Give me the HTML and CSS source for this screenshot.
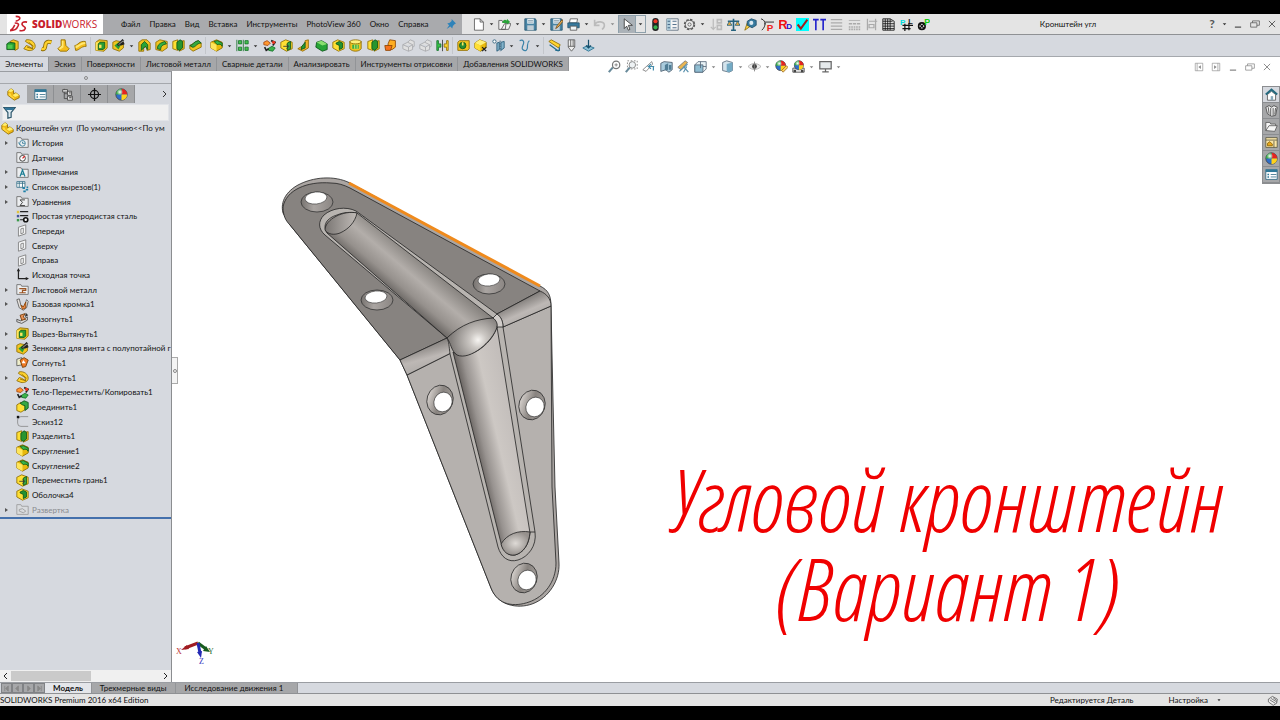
FILE: index.html
```
<!DOCTYPE html>
<html lang="ru">
<head>
    <meta charset="UTF-8">
    <meta name="viewport" content="width=device-width, initial-scale=1.0">
    <title>Кронштейн угл - SOLIDWORKS</title>
    <link rel="stylesheet" href="styles.css">
</head>
<body>
    <!-- Набор значков -->
    <svg class="sprite" aria-hidden="true">
        <defs>
            <radialGradient id="ball"><stop offset="0" stop-color="#fff"/><stop offset="1" stop-color="#fff" stop-opacity="0"/></radialGradient>
            <symbol id="caret" viewBox="0 0 8 16"><path d="M2 7h4L4 9.500z" fill="#333"/></symbol>
            <symbol id="cube" viewBox="0 0 16 16"><path d="M1 5l6-4 8 3v7l-7 4-7-4z" fill="#e8b90c" stroke="#8c6a00"/><path d="M1 5l7 3 7-4-8-3z" fill="#fff07a"/><path d="M8 8v7l-7-4V5z" fill="#ffdf34"/></symbol>
            <symbol id="boss" viewBox="0 0 16 16"><path d="M5 3l4-2 6 2v9l-4 2z" fill="#f1c420" stroke="#8c6a00"/><path d="M1 6l3-2 7 1v8H1z" fill="#24a132" stroke="#0a5418"/><path d="M2 7h6v5H2z" fill="#50ca4e"/></symbol>
            <symbol id="revolve" viewBox="0 0 16 16"><path d="M4 1c6-1 11 3 11 8 0 4-5 6-9 5l-5-2 3-4 3 1 5 3-1-4-8-5z" fill="#ffd22e" stroke="#8c6a00"/><path d="M5 10l7 2M7 4l6 5" stroke="#8c6a00"/></symbol>
            <symbol id="sweep" viewBox="0 0 16 16"><path d="M2 12c5 2 4-3 5-6s4-3 7-2" fill="none" stroke="#8c6a00" stroke-width="5"/><path d="M2 12c5 2 4-3 5-6s4-3 7-2" fill="none" stroke="#ffd22e" stroke-width="3"/></symbol>
            <symbol id="loft" viewBox="0 0 16 16"><path d="M5 1h5l1 7 4 4-3 3H4l-3-3 4-4z" fill="#f5bd1b" stroke="#8c6a00"/><path d="M6 2h2v8l-4 3-2-1 4-4z" fill="#ffe873"/></symbol>
            <symbol id="boundary" viewBox="0 0 16 16"><path d="M1 8c4 0 5-6 13-5l1 6c-7 0-8 5-13 5z" fill="#f5bd1b" stroke="#8c6a00"/><path d="M2 8c5 0 6-5 12-4v2c-6 0-8 5-12 5z" fill="#ffe873"/></symbol>
            <symbol id="cut" viewBox="0 0 16 16"><path d="M1 4l4-3 10 1v9l-4 4-10-1z" fill="#f1c420" stroke="#8c6a00"/><path d="M1 4h9v10H1z" fill="#ffe65c"/><path d="M4 6l2-2h6v7l-2 2H4z" fill="#289d35" stroke="#0a5418"/><path d="M5 7h3v4H5z" fill="#ffe65c"/></symbol>
            <symbol id="hole" viewBox="0 0 16 16"><path d="M1 4l4-2 9 2v7l-5 4-8-3z" fill="#f1c420" stroke="#8c6a00"/><path d="M3 8l5-4 3 3-3 6z" fill="#289d35"/><path d="M7 8l7-7M10 7l5-2" stroke="#222" stroke-width="3"/><path d="M8 7l6-5" stroke="#bbb"/></symbol>
            <symbol id="arch" viewBox="0 0 16 16"><path d="M1 4l4-3h6l4 4v8l-4 1-1-5-3 2v4H1z" fill="#f1c420" stroke="#8c6a00"/><path d="M4 14V7l4-4 4 4v6l-3-4z" fill="#28a436" stroke="#0a5418"/></symbol>
            <symbol id="cutsweep" viewBox="0 0 16 16"><path d="M1 4l5-3 9 2v8l-6 4-8-2z" fill="#f1c420" stroke="#8c6a00"/><path d="M3 12c0-6 4-7 9-9l2 3c-5 1-7 3-7 7z" fill="#35b044" stroke="#0a5418"/></symbol>
            <symbol id="split" viewBox="0 0 16 16"><path d="M1 3l6-2v13l-6-2z" fill="#ffdf34" stroke="#8c6a00"/><path d="M9 3l6-1v10l-6 3z" fill="#f1c420" stroke="#8c6a00"/><path d="M6 4l4-3 3 2v8l-4 3-3-2z" fill="#27952f" stroke="#0a5418"/></symbol>
            <symbol id="cutbound" viewBox="0 0 16 16"><path d="M1 8l10-6 4 3v5L5 15l-4-3z" fill="#f1c420" stroke="#8c6a00"/><path d="M1 8c4 0 5-6 11-6l3 3C9 5 8 11 4 10z" fill="#35a93f" stroke="#0a5418"/></symbol>
            <symbol id="fillet" viewBox="0 0 16 16"><path d="M1 4l7-3 7 3v7l-7 4-7-4z" fill="#e8b90c" stroke="#8c6a00"/><path d="M1 4l7 3v8l-7-4z" fill="#ffe65c"/><path d="M5 3l4-1 6 3v4c-1-3-4-3-6-2z" fill="#39b649" stroke="#0a5418"/></symbol>
            <symbol id="pattern" viewBox="0 0 16 16"><path d="M3 2h4v4H3zM11 2h4v4h-4zM3 10h4v4H3zM11 10h4v4h-4z" fill="#44c24d" stroke="#14702a"/><path d="M1 1v14M9 1v14" stroke="#14702a"/></symbol>
            <symbol id="move" viewBox="0 0 16 16"><path d="M1 4l4-2 4 3-3 3-5-1z" fill="#ff9830" stroke="#a2440f"/><path d="M6 12l5-3 4 2-3 4-5-1z" fill="#3cb34a" stroke="#14702a"/><path d="M10 2l5 2-3 4M2 10l2 4 3-2" fill="none" stroke="#222" stroke-width="2"/><circle cx="13" cy="4" r="2" fill="#e93722"/></symbol>
            <symbol id="combine" viewBox="0 0 16 16"><path d="M1 6l5-3 5 3v6l-5 3-5-2z" fill="#ffdf34" stroke="#8c6a00"/><path d="M5 4l5-3 5 2v7l-4 3V7L8 6z" fill="#36a743" stroke="#0a5418"/></symbol>
            <symbol id="moveface" viewBox="0 0 16 16"><path d="M1 4l6-3 8 3v8l-7 3-7-4z" fill="#ffdf34" stroke="#8c6a00"/><path d="M9 5l4-2v9l-4 2z" fill="#36a743" stroke="#0a5418"/><path d="M4 9h6M8 7l3 2-3 3" fill="none" stroke="#333"/></symbol>
            <symbol id="rib" viewBox="0 0 16 16"><path d="M10 2l4-1v10l-7 4-6-3 5-3c3-1 4-4 4-7z" fill="#f1b22b" stroke="#8c6a00"/><path d="M6 9l4-5v7l-5 2z" fill="#279c34" stroke="#0a5418"/></symbol>
            <symbol id="draft" viewBox="0 0 16 16"><path d="M2 4l6-2 7 4v7l-6 2-8-5z" fill="#27a537" stroke="#0a5418"/><path d="M2 4l7 4 6-2-7-4z" fill="#89df70"/></symbol>
            <symbol id="shell" viewBox="0 0 16 16"><path d="M1 4l6-3 8 3v8l-7 3-7-4z" fill="#ffdf34" stroke="#8c6a00"/><path d="M5 5l4-2 4 2v6l-4 2V8L5 6z" fill="#229232" stroke="#0a5418"/></symbol>
            <symbol id="wrap" viewBox="0 0 16 16"><path d="M1 3h14v9c-3 4-11 4-14 0z" fill="#f1c420" stroke="#8c6a00"/><ellipse cx="8" cy="3.500" rx="7" ry="2.500" fill="#fff07a" stroke="#8c6a00"/><path d="M4 7h8v5H4z" fill="#35b044"/><path d="M7 7v5M10 7v5" stroke="#fff07a"/></symbol>
            <symbol id="bend" viewBox="0 0 16 16"><path d="M7 1l7 1v8l-4 3H5V6z" fill="#ffae22" stroke="#8a4300"/><path d="M1 8h9l-2 6H2z" fill="#f5721e" stroke="#8a4300"/></symbol>
            <symbol id="ghost" viewBox="0 0 16 16"><path d="M1 7l6-3 6 3v6l-5 2-7-3zM7 4l3-3 5 2v6l-2 1M1 7l7 3 5-3M8 10v5" fill="#e0e0e0" stroke="#a6a8ab"/></symbol>
            <symbol id="mirror" viewBox="0 0 16 16"><path d="M1 2h2v4h3v4H3v4H1z" fill="#38c449" stroke="#14702a"/><path d="M15 2h-2v4h-3v4h3v4h2z" fill="#ffd52e" stroke="#8c6a00"/><path d="M8 1v14" stroke="#333"/></symbol>
            <symbol id="dome" viewBox="0 0 16 16"><path d="M1 4l2-2h12v10l-2 2H1z" fill="#f1c420" stroke="#8c6a00"/><circle cx="7" cy="8" r="4" fill="#278e34" stroke="#0a5418"/><path d="M6 4h2v4H6z" fill="#ffe65c"/></symbol>
            <symbol id="delbody" viewBox="0 0 16 16"><use href="#cube"/><path d="M10 10l5 5M15 10l-5 5" stroke="#222" stroke-width="1.500"/></symbol>
            <symbol id="refgeo" viewBox="0 0 16 16"><path d="M6 5l3-1v9l-3 2zM11 4l4-1v8l-4 3z" fill="#83b2ca" stroke="#225875"/><path d="M10 2v13" stroke="#225875" stroke-dasharray="2 1"/><circle cx="3" cy="3" r="2" fill="#fff" stroke="#225875"/></symbol>
            <symbol id="curve" viewBox="0 0 16 16"><path d="M2 2c5-2 6 2 4 6s0 7 4 6c4-2-1-8 4-12" fill="none" stroke="#3a83a9" stroke-width="1.500"/></symbol>
            <symbol id="measure" viewBox="0 0 16 16"><path d="M1 3l3-2 11 6-2 4z" fill="#ffd52e" stroke="#8c6a00"/><path d="M2 7l11 8M9 14h5v-4" fill="none" stroke="#246d8e" stroke-width="1.500"/></symbol>
            <symbol id="pen" viewBox="0 0 16 16"><path d="M4 1h8v9l-4 5-4-5zM4 9h8M7 1v8M10 1v8" fill="#eee" stroke="#555"/></symbol>
            <symbol id="anchor" viewBox="0 0 16 16"><path d="M1 11l6-3 8 3-7 4z" fill="#8dc1d7" stroke="#246d8e"/><path d="M8 1v10M5 8l3 3 3-3" stroke="#154f6c" fill="none" stroke-width="1.500"/></symbol>
            <symbol id="part" viewBox="0 0 16 16"><path d="M1 4l4-3 3 2v4l3-1 4 3v3l-6 3-8-6z" fill="#eeb716" stroke="#8c6a00"/><path d="M1 4l4-3 3 2-3 2zM7 9l4-3 4 3-5 2z" fill="#ffef6e"/><path d="M2 6l3 1v2l4 3v2L2 9z" fill="#ffd83c"/></symbol>
            <symbol id="props" viewBox="0 0 16 16"><path d="M1 2h14v12H1z" fill="#fff" stroke="#2a6480"/><path d="M1 2h14v3H1z" fill="#2f7898"/><path d="M3 7h2v2H3zM3 10h2v2H3z" fill="#2f7898"/><path d="M7 8h7M7 11h7" stroke="#346e87"/></symbol>
            <symbol id="config" viewBox="0 0 16 16"><path d="M4 1v12h5M4 7h4" fill="none" stroke="#444"/><path d="M2 2h6v3H2zM8 4h5v5H8zM8 10h6v5H8z" fill="#ddd" stroke="#444"/><path d="M10 6h2M10 12h3" stroke="#222"/></symbol>
            <symbol id="target" viewBox="0 0 16 16"><circle cx="8" cy="8" r="5" fill="none" stroke="#111" stroke-width="1.500"/><path d="M8 0v16M0 8h16" stroke="#111" stroke-width="1.500"/></symbol>
            <symbol id="sphere" viewBox="0 0 16 16"><circle cx="8" cy="8" r="7" fill="#2f6fca" stroke="#444"/><path d="M8 8V1a7 7 0 0 1 7 7z" fill="#e5251f"/><path d="M8 8h7a7 7 0 0 1-7 7z" fill="#ffd21b"/><path d="M8 8H1a7 7 0 0 1 7-7z" fill="#38a844"/><circle cx="6" cy="5" r="4" fill="url(#ball)"/></symbol>
            <symbol id="scene" viewBox="0 0 16 16"><path d="M1 10h14v5H1z" fill="#eee" stroke="#444"/><path d="M2 12h3v3H2zM11 12h3v3h-3z" fill="#444"/><use href="#sphere" x="2" y="0" width="13" height="13"/></symbol>
            <symbol id="appear" viewBox="0 0 16 16"><use href="#sphere" width="14" height="14"/><path d="M8 13l6-6 2 2-6 6z" fill="#ffd45c" stroke="#986524"/></symbol>
            <symbol id="funnel" viewBox="0 0 16 16"><path d="M1 2h14l-5 6v6l-4 1V8z" fill="#dceaf1" stroke="#30596d" stroke-width="1.500"/><path d="M2 2h12l-2 3H4z" fill="#31759a"/></symbol>
            <symbol id="folder" viewBox="0 0 16 16"><path d="M1 2h5l1 2h8v10H1z" fill="#eceef0" stroke="#666"/></symbol>
            <symbol id="history" viewBox="0 0 16 16"><use href="#folder"/><circle cx="8" cy="9" r="3.500" fill="none" stroke="#2c7796"/><path d="M8 7v2h3M3 8l2 3" stroke="#2c7796" fill="none"/></symbol>
            <symbol id="sensor" viewBox="0 0 16 16"><use href="#folder"/><circle cx="8" cy="9" r="3.500" fill="#fff" stroke="#222"/><path d="M8 9l3-3" stroke="#d22" stroke-width="1.500"/></symbol>
            <symbol id="note" viewBox="0 0 16 16"><use href="#folder"/><path d="M5 13l3-8 3 8M6 10h4" fill="none" stroke="#1f7f96" stroke-width="1.500"/></symbol>
            <symbol id="cutlist" viewBox="0 0 16 16"><path d="M1 2h10v7H1zM4 2v7M8 2v7M1 4h10" fill="#fff" stroke="#346e87"/><path d="M8 9h3v2H8zM12 11h3v2h-3zM9 13h3v2H9zM13 8h2v2h-2z" fill="#1b80a8"/></symbol>
            <symbol id="sum" viewBox="0 0 16 16"><use href="#folder"/><path d="M11 6H5l3 3-3 4h6" fill="none" stroke="#222"/></symbol>
            <symbol id="material" viewBox="0 0 16 16"><path d="M5 2h10M5 7h10M5 12h5" stroke="#222" stroke-width="1.500"/><path d="M1 1h3v3H1z" fill="#e0c33d"/><path d="M1 6h3v3H1z" fill="#459"/><path d="M1 11h3v3H1z" fill="#3a9a4a"/><circle cx="12" cy="12" r="2.500" fill="#fff" stroke="#111" stroke-width="2"/></symbol>
            <symbol id="plane" viewBox="0 0 16 16"><path d="M3 4l9-3v11l-9 3zM6 6l3-1v6l-3 1z" fill="#f4f5f6" stroke="#777"/></symbol>
            <symbol id="origin" viewBox="0 0 16 16"><path d="M3 2v11h11" fill="none" stroke="#222" stroke-width="1.500"/><path d="M3 0l2 4H1zM16 13l-4-2v4z" fill="#222"/></symbol>
            <symbol id="sheet" viewBox="0 0 16 16"><use href="#folder"/><path d="M4 7h8v2H8v3H4M8 12h4" fill="none" stroke="#9c5423" stroke-width="1.500"/></symbol>
            <symbol id="flange" viewBox="0 0 16 16"><path d="M1 2l3-1 2 8 4 2 3-9 2 2-2 8-4 3-5-3z" fill="#e9e5e0" stroke="#555"/><path d="M6 9l3 2 3-6v7l-4 2z" fill="#ef8a4a" stroke="#8a4300"/></symbol>
            <symbol id="unfold" viewBox="0 0 16 16"><path d="M1 9l5 2 8-5v4l-7 4-6-2z" fill="#ddd" stroke="#444"/><path d="M5 4l6-2-2 4 3 3-5 1z" fill="#e8935a" stroke="#6d3500"/><path d="M12 1l3 3-4 2z" fill="#333"/></symbol>
            <symbol id="refold" viewBox="0 0 16 16"><path d="M1 4l6-2v9l-6 1z" fill="#eec" stroke="#555"/><path d="M5 5l5-3 5 3-3 8-4 1z" fill="#ef7a24" stroke="#6d3500"/><path d="M9 5l3 4H7z" fill="#fff"/></symbol>
            <symbol id="sketch" viewBox="0 0 16 16"><path d="M15 2H6a4 4 0 0 0-4 4v4a4 4 0 0 0 4 4h9" fill="none" stroke="#888"/><path d="M1 1h3v3H1z" fill="#111"/></symbol>
            <symbol id="flat" viewBox="0 0 16 16"><path d="M1 2h5l1 2h8v10H1z" fill="#d9dbde" stroke="#999"/><path d="M4 8l4-1 4 3-3 2-5-2z" fill="none" stroke="#999"/></symbol>
            <symbol id="pushpin" viewBox="0 0 16 16"><path d="M9 0l7 7-2 1-3 3-1 4-3-3-6 4 4-6-3-3 4-1 3-3z" fill="#2f83b9"/></symbol>
            <symbol id="new" viewBox="0 0 16 16"><path d="M3 1h7l4 4v10H3zM10 1v4h4" fill="#fff" stroke="#555"/></symbol>
            <symbol id="open" viewBox="0 0 16 16"><path d="M1 14V3h4l1 2h4l-1 9zM4 14l4-7h8l-3 7z" fill="#f4f4f4" stroke="#555"/><path d="M5 6c2-5 4-4 6-3V1l4 4-4 3V6" fill="#2ba33a"/></symbol>
            <symbol id="save" viewBox="0 0 16 16"><path d="M1 1h13l1 2v12H1z" fill="#4884a4" stroke="#26546e"/><path d="M4 1h8v6H4z" fill="#e8f0f4"/><path d="M4 9h8v6H4z" fill="#c0ced6"/><path d="M5 3h6M5 5h6" stroke="#7c98a6"/></symbol>
            <symbol id="saveas" viewBox="0 0 16 16"><use href="#save"/><path d="M7 13l2-4 6-7 1 2-6 7z" fill="#f0b95a" stroke="#704818"/></symbol>
            <symbol id="print" viewBox="0 0 16 16"><path d="M4 1h9l-1 5H3z" fill="#fff" stroke="#555"/><path d="M1 6h14v6H1z" fill="#377a9e" stroke="#26546e"/><path d="M4 10h8v5H4z" fill="#f0f4f6" stroke="#555"/></symbol>
            <symbol id="undo" viewBox="0 0 16 16"><path d="M2 2v7h6M2 8c3-5 12-4 12 1 0 3-1 4-3 5" fill="none" stroke="#bbb" stroke-width="2"/></symbol>
            <symbol id="cursor" viewBox="0 0 16 16"><path d="M4 1v12l3-3 2 5 2-1-2-5h5z" fill="#fff" stroke="#333"/></symbol>
            <symbol id="traffic" viewBox="0 0 16 16"><rect x="4" y="0" width="8" height="16" rx="4" fill="#222"/><circle cx="8" cy="4" r="2.500" fill="#f03524"/><circle cx="8" cy="11.500" r="2.500" fill="#35b34b"/></symbol>
            <symbol id="options" viewBox="0 0 16 16"><path d="M1 1h14v14H1z" fill="#f4f4f4" stroke="#567"/><path d="M1 1h5v14H1z" fill="#aecbd9"/><path d="M2 4h3M2 8h3M2 12h3M8 4h5M8 8h5M8 12h5" stroke="#357"/></symbol>
            <symbol id="gear" viewBox="0 0 16 16"><circle cx="8" cy="8" r="6" fill="none" stroke="#555" stroke-width="2" stroke-dasharray="3 1.700"/><circle cx="8" cy="8" r="5" fill="#eee" stroke="#555"/><circle cx="8" cy="8" r="2" fill="none" stroke="#555"/></symbol>
            <symbol id="sort" viewBox="0 0 16 16"><path d="M4 1v13M1 11l3 3 3-3" fill="none" stroke="#bbb" stroke-width="1.500"/><path d="M9 2h5v4H9zM9 9h5v5H9z" fill="none" stroke="#bbb" stroke-width="2"/></symbol>
            <symbol id="scales" viewBox="0 0 16 16"><path d="M8 1v13M1 4h14M5 15h6" stroke="#25627e" stroke-width="2"/><path d="M0 9l3-5 3 5zM10 9l3-5 3 5z" fill="#e9a93b" stroke="#25627e"/></symbol>
            <symbol id="tape" viewBox="0 0 16 16"><path d="M1 15l3-9 4 4z" fill="#ffd54c" stroke="#8c6a00"/><path d="M4 4l5-3 6 2v6l-5 3-6-3z" fill="#377a9e" stroke="#1c4e69"/><circle cx="9" cy="6" r="2.500" fill="#dceaf1"/></symbol>
            <symbol id="yp" viewBox="0 0 16 16"><path d="M0 1c4 1 5 4 5 7M5 5h11M5 6c0 4-1 6-4 9" fill="none" stroke="#111"/><text x="7" y="16" fill="#e22" font-size="12" font-weight="bold">P</text></symbol>
            <symbol id="rd" viewBox="0 0 16 16"><text x="-1" y="14" fill="#e11" font-size="16" font-weight="bold">R</text><text x="9" y="14" fill="#11c" font-size="10" font-weight="bold">D</text></symbol>
            <symbol id="check" viewBox="0 0 16 16"><path d="M0 0h16v16H0z" fill="#0ff"/><path d="M2 8l4 5 8-11" fill="none" stroke="#a02020" stroke-width="2.500"/></symbol>
            <symbol id="tt" viewBox="0 0 16 16"><path d="M0 2h7M3.500 2v13M9 2h7M12.500 2v13" stroke="#22c" stroke-width="2"/></symbol>
            <symbol id="lines" viewBox="0 0 16 16"><path d="M1 2h14M1 6h14M1 10h14M1 14h14" stroke="#aaa" stroke-width="1.500"/></symbol>
            <symbol id="dashes" viewBox="0 0 16 16"><path d="M1 3h14" stroke="#aaa"/><path d="M1 7h14" stroke="#aaa" stroke-dasharray="4 1" stroke-width="2"/><path d="M1 11h14M1 14h14" stroke="#aaa" stroke-dasharray="2 1" stroke-width="2"/></symbol>
            <symbol id="align" viewBox="0 0 16 16"><path d="M3 1v14M13 1v14M5 4h10M5 8h6v4H5z" fill="none" stroke="#aaa" stroke-width="1.500"/></symbol>
            <symbol id="grid" viewBox="0 0 16 16"><path d="M1 1h9l5 3v11H1z" fill="#ddd" stroke="#111"/><path d="M1 4h12M1 7h14M1 10h14M1 13h14M4 1v14M7 1v14M10 1v14" stroke="#111"/></symbol>
            <symbol id="pl" viewBox="0 0 16 16"><text x="0" y="8" fill="#0dd" font-size="10" font-weight="bold">P</text><text x="10" y="7" fill="#111" font-size="9" font-weight="bold">L</text><path d="M3 9h13M3 13h10M6 7v9M11 6v9" stroke="#111" stroke-width="1.500"/></symbol>
            <symbol id="xp" viewBox="0 0 16 16"><circle cx="6" cy="10" r="4" fill="none" stroke="#111" stroke-width="2"/><path d="M3 7l6 6M9 7l-6 6" stroke="#111" stroke-width="1.500"/><text x="9" y="8" fill="#1c1" font-size="11" font-weight="bold">P</text></symbol>
            <symbol id="zoomfit" viewBox="0 0 16 16"><path d="M1 15l5-6" stroke="#688a9a" stroke-width="2.500"/><circle cx="10" cy="6" r="4.500" fill="#fff" stroke="#777" stroke-width="1.500"/><path d="M10 4v4M8 6h4" stroke="#777"/></symbol>
            <symbol id="zoomarea" viewBox="0 0 16 16"><path d="M3 1h12v10H3z" fill="none" stroke="#777" stroke-dasharray="2 2"/><path d="M1 15l5-6" stroke="#688a9a" stroke-width="2.500"/><circle cx="9" cy="6" r="4" fill="#eef2f4" stroke="#777"/></symbol>
            <symbol id="prev" viewBox="0 0 16 16"><path d="M1 12l11-10 1 3-8 9z" fill="#fff" stroke="#777"/><path d="M15 8H8l3-3M8 8l3 3M14 8v5" fill="none" stroke="#458dac" stroke-width="1.500"/></symbol>
            <symbol id="section" viewBox="0 0 16 16"><path d="M1 4l4-2 10 1v9l-4 3-4-3-6 2z" fill="#a9cbdc" stroke="#456"/><path d="M6 6l4-2v8l-4 1zM11 6h3v6h-3z" fill="#507d95"/></symbol>
            <symbol id="dynview" viewBox="0 0 16 16"><path d="M1 9l9-8 3 2-8 9z" fill="#e8b552" stroke="#777"/><path d="M3 14l10-9M8 8l6 7M12 8l-4 7" stroke="#5b92ae" stroke-width="1.500"/></symbol>
            <symbol id="orient" viewBox="0 0 16 16"><path d="M1 6l4-4h10v9l-4 4H1z" fill="#e8f2f6" stroke="#567"/><path d="M1 6h10v9H1z" fill="#8fbdd2" stroke="#567"/><path d="M8 2v8M11 8h4" stroke="#567"/></symbol>
            <symbol id="display" viewBox="0 0 16 16"><path d="M2 3l5-2 7 2v10l-4 2-8-2z" fill="#d4e4ec" stroke="#567"/><path d="M7 5l7-2v10l-4 2-3-1z" fill="#73aac4"/></symbol>
            <symbol id="eye" viewBox="0 0 16 16"><path d="M0 8c5-5 11-5 16 0-5 5-11 5-16 0z" fill="#eee" stroke="#aaa"/><circle cx="8" cy="8" r="3" fill="#444"/><path d="M8 2v12" stroke="#777"/></symbol>
            <symbol id="monitor" viewBox="0 0 16 16"><path d="M1 2h14v9H1zM8 11v3M4 14.500h8" fill="#e6eaec" stroke="#666" stroke-width="1.500"/></symbol>
            <symbol id="left" viewBox="0 0 16 16"><path d="M2 2h12v12H2zM5 2v12" fill="#fff" stroke="#888"/><path d="M11 5v6L7 8z" fill="#888"/></symbol>
            <symbol id="right" viewBox="0 0 16 16"><path d="M2 2h12v12H2zM11 2v12" fill="#fff" stroke="#888"/><path d="M5 5v6l4-3z" fill="#888"/></symbol>
            <symbol id="min" viewBox="0 0 16 16"><path d="M3 13h10" stroke="currentColor" stroke-width="2"/></symbol>
            <symbol id="restore" viewBox="0 0 16 16"><path d="M1 6h10v7H1zM4 6V3h11v7h-4" fill="none" stroke="currentColor" stroke-width="1.200"/></symbol>
            <symbol id="close" viewBox="0 0 16 16"><path d="M3 3l10 10M13 3L3 13" stroke="currentColor" stroke-width="1.500"/></symbol>
            <symbol id="home" viewBox="0 0 16 16"><path d="M3 8v7h10V8L8 4z" fill="#fff" stroke="#555"/><path d="M1 8l7-6 7 6" fill="none" stroke="#246a7f" stroke-width="2.500"/><path d="M7 10h3v5H7z" fill="#8ab"/></symbol>
            <symbol id="library" viewBox="0 0 16 16"><path d="M1 4l4-2 3 2 3-2 4 2-2 10-5 1-5-3z" fill="#eee" stroke="#444"/><path d="M4 4l1 8M7 5v9M10 5v9M13 5l-1 8" stroke="#444"/></symbol>
            <symbol id="files" viewBox="0 0 16 16"><path d="M1 13V3h5l1 2h6v2M1 13l4-6h10l-3 7z" fill="#f6f6f6" stroke="#555"/></symbol>
            <symbol id="palette" viewBox="0 0 16 16"><path d="M1 2h14v12H1z" fill="#fbe6a5" stroke="#554"/><path d="M1 5h14M11 6v8" stroke="#554"/><path d="M3 12V9l3-2 3 3v2z" fill="#e8a71a" stroke="#875f00"/></symbol>
            <symbol id="tag" viewBox="0 0 16 16"><path d="M2 6l6-4 7 4-1 6-5 3-7-5z" fill="#eee" stroke="#444"/><path d="M4 7l8 5M6 5l8 5M9 4l5 4" stroke="#444"/></symbol>
        </defs>
    </svg>

    <div class="window">
        <!-- Заголовок: логотип, меню, быстрые команды -->
        <header class="titlebar">
            <div class="brand">
                <svg class="brand-mark" viewBox="0 0 19 18" aria-hidden="true"><path d="M6 1c4 0 5 1 4 3-1 1-2 2-4 2M5 8c4 0 5 1 3 4-1 3-4 4-8 4 3-1 4-4 5-6M18 7c-4-1-6 1-5 3 1 2 4 2 3 4-1 3-3 2-6 2" fill="none" stroke="#c8202c" stroke-width="1.700"/></svg>
                <span><b>SOLID</b>WORKS</span>
            </div>
            <nav class="menu">
                <button>Файл</button>
                <button>Правка</button>
                <button>Вид</button>
                <button>Вставка</button>
                <button>Инструменты</button>
                <button>PhotoView 360</button>
                <button>Окно</button>
                <button>Справка</button>
                <button class="icon pin" aria-label="Закрепить"><svg><use href="#pushpin"/></svg></button>
            </nav>
            <div class="quick tools">
                <div class="group">
                    <button class="icon" aria-label="Создать"><svg><use href="#new"/></svg></button><button class="drop" aria-label="Еще"><svg><use href="#caret"/></svg></button>
                    <button class="icon" aria-label="Открыть"><svg><use href="#open"/></svg></button><button class="drop" aria-label="Еще"><svg><use href="#caret"/></svg></button>
                    <button class="icon" aria-label="Сохранить"><svg><use href="#save"/></svg></button><button class="drop" aria-label="Еще"><svg><use href="#caret"/></svg></button>
                    <button class="icon" aria-label="Сохранить как"><svg><use href="#saveas"/></svg></button>
                    <button class="icon" aria-label="Печать"><svg><use href="#print"/></svg></button><button class="drop" aria-label="Еще"><svg><use href="#caret"/></svg></button>
                    <button class="icon" aria-label="Отменить"><svg><use href="#undo"/></svg></button><button class="drop faded" aria-label="Еще"><svg><use href="#caret"/></svg></button>
                </div>
                <div class="group select">
                    <button class="icon pressed" aria-label="Выбрать"><svg><use href="#cursor"/></svg></button><button class="drop" aria-label="Еще"><svg><use href="#caret"/></svg></button>
                </div>
                <div class="group">
                    <button class="icon" aria-label="Перестроить"><svg><use href="#traffic"/></svg></button>
                    <button class="icon" aria-label="Свойства"><svg><use href="#options"/></svg></button>
                    <button class="icon" aria-label="Параметры"><svg><use href="#gear"/></svg></button><button class="drop" aria-label="Еще"><svg><use href="#caret"/></svg></button>
                </div>
                <div class="group">
                    <button class="icon" aria-label="Сортировка"><svg><use href="#sort"/></svg></button>
                    <button class="icon" aria-label="Масса"><svg><use href="#scales"/></svg></button>
                    <button class="icon" aria-label="Измерить"><svg><use href="#tape"/></svg></button>
                    <button class="icon" aria-label="Профиль"><svg><use href="#yp"/></svg></button>
                </div>
                <div class="group">
                    <button class="icon" aria-label="Радиус"><svg><use href="#rd"/></svg></button>
                    <button class="icon" aria-label="Проверка"><svg><use href="#check"/></svg></button>
                    <button class="icon" aria-label="Текст"><svg><use href="#tt"/></svg></button>
                    <button class="icon" aria-label="Толщина линий"><svg><use href="#lines"/></svg></button>
                </div>
                <div class="group">
                    <button class="icon" aria-label="Тип линий"><svg><use href="#dashes"/></svg></button>
                    <button class="icon" aria-label="Выровнять"><svg><use href="#align"/></svg></button>
                    <button class="icon" aria-label="Таблица"><svg><use href="#grid"/></svg></button>
                </div>
                <div class="group">
                    <button class="icon" aria-label="Плоскость"><svg><use href="#pl"/></svg></button>
                    <button class="icon" aria-label="Точка"><svg><use href="#xp"/></svg></button>
                </div>
            </div>
            <h1>Кронштейн угл</h1>
            <div class="controls">
                <button class="help">?</button><button class="drop" aria-label="Еще"><svg><use href="#caret"/></svg></button>
                <button class="icon" aria-label="Свернуть"><svg><use href="#min"/></svg></button>
                <button class="icon" aria-label="Восстановить"><svg><use href="#restore"/></svg></button>
                <button class="icon" aria-label="Закрыть"><svg><use href="#close"/></svg></button>
            </div>
        </header>

        <!-- Панель элементов -->
        <div class="features tools">
            <div class="group">
                <button class="icon" aria-label="Вытянутая бобышка"><svg><use href="#boss"/></svg></button>
                <button class="icon" aria-label="Повернутая бобышка"><svg><use href="#revolve"/></svg></button>
                <button class="icon" aria-label="По траектории"><svg><use href="#sweep"/></svg></button>
                <button class="icon" aria-label="По сечениям"><svg><use href="#loft"/></svg></button>
                <button class="icon" aria-label="На границе"><svg><use href="#boundary"/></svg></button>
            </div>
            <div class="group lined">
                <button class="icon" aria-label="Вытянутый вырез"><svg><use href="#cut"/></svg></button>
                <button class="icon" aria-label="Отверстие"><svg><use href="#hole"/></svg></button><button class="drop" aria-label="Еще"><svg><use href="#caret"/></svg></button>
                <button class="icon" aria-label="Повернутый вырез"><svg><use href="#arch"/></svg></button>
                <button class="icon" aria-label="Вырез по траектории"><svg><use href="#cutsweep"/></svg></button>
                <button class="icon" aria-label="Вырез по сечениям"><svg><use href="#split"/></svg></button>
                <button class="icon" aria-label="Вырез на границе"><svg><use href="#cutbound"/></svg></button>
            </div>
            <div class="group lined">
                <button class="icon" aria-label="Скругление"><svg><use href="#fillet"/></svg></button><button class="drop" aria-label="Еще"><svg><use href="#caret"/></svg></button>
                <button class="icon" aria-label="Массив"><svg><use href="#pattern"/></svg></button><button class="drop" aria-label="Еще"><svg><use href="#caret"/></svg></button>
            </div>
            <div class="group">
                <button class="icon" aria-label="Переместить"><svg><use href="#move"/></svg></button>
                <button class="icon" aria-label="Переместить грань"><svg><use href="#moveface"/></svg></button>
                <button class="icon" aria-label="Ребро"><svg><use href="#rib"/></svg></button>
            </div>
            <div class="group">
                <button class="icon" aria-label="Уклон"><svg><use href="#draft"/></svg></button>
                <button class="icon" aria-label="Оболочка"><svg><use href="#shell"/></svg></button>
                <button class="icon" aria-label="Перенос"><svg><use href="#wrap"/></svg></button>
            </div>
            <div class="group">
                <button class="icon" aria-label="Разделить"><svg><use href="#split"/></svg></button>
                <button class="icon" aria-label="Гибкие"><svg><use href="#bend"/></svg></button>
            </div>
            <div class="group">
                <button class="icon" aria-label="Пересечение"><svg><use href="#ghost"/></svg></button>
                <button class="icon" aria-label="Объединить"><svg><use href="#ghost"/></svg></button>
                <button class="icon" aria-label="Зеркало"><svg><use href="#mirror"/></svg></button>
            </div>
            <div class="group lined">
                <button class="icon" aria-label="Купол"><svg><use href="#dome"/></svg></button>
                <button class="icon" aria-label="Удалить тело"><svg><use href="#delbody"/></svg></button>
            </div>
            <div class="group">
                <button class="icon" aria-label="Справочная геометрия"><svg><use href="#refgeo"/></svg></button><button class="drop" aria-label="Еще"><svg><use href="#caret"/></svg></button>
                <button class="icon" aria-label="Кривые"><svg><use href="#curve"/></svg></button><button class="drop" aria-label="Еще"><svg><use href="#caret"/></svg></button>
            </div>
            <div class="group lined">
                <button class="icon" aria-label="Измерить"><svg><use href="#measure"/></svg></button>
                <button class="icon" aria-label="Эскиз"><svg><use href="#pen"/></svg></button>
                <button class="icon" aria-label="Привязка"><svg><use href="#anchor"/></svg></button>
            </div>
        </div>

        <!-- Вкладки и панель вида -->
        <div class="tabrow">
            <div class="tabs">
                <button class="active">Элементы</button>
                <button>Эскиз</button>
                <button>Поверхности</button>
                <button>Листовой металл</button>
                <button>Сварные детали</button>
                <button>Анализировать</button>
                <button>Инструменты отрисовки</button>
                <button>Добавления SOLIDWORKS</button>
            </div>
            <div class="headsup tools">
                <div class="group">
                    <button class="icon" aria-label="Во весь экран"><svg><use href="#zoomfit"/></svg></button>
                    <button class="icon" aria-label="Увеличить область"><svg><use href="#zoomarea"/></svg></button>
                    <button class="icon" aria-label="Предыдущий вид"><svg><use href="#prev"/></svg></button>
                </div>
                <div class="group">
                    <button class="icon" aria-label="Разрез"><svg><use href="#section"/></svg></button>
                    <button class="icon" aria-label="Динамический вид"><svg><use href="#dynview"/></svg></button>
                    <button class="icon" aria-label="Ориентация"><svg><use href="#orient"/></svg></button><button class="drop" aria-label="Еще"><svg><use href="#caret"/></svg></button>
                </div>
                <div class="group">
                    <button class="icon" aria-label="Стиль отображения"><svg><use href="#display"/></svg></button><button class="drop" aria-label="Еще"><svg><use href="#caret"/></svg></button>
                </div>
                <div class="group">
                    <button class="icon" aria-label="Скрыть"><svg><use href="#eye"/></svg></button><button class="drop" aria-label="Еще"><svg><use href="#caret"/></svg></button>
                </div>
                <div class="group">
                    <button class="icon" aria-label="Внешний вид"><svg><use href="#appear"/></svg></button>
                    <button class="icon" aria-label="Сцена"><svg><use href="#scene"/></svg></button><button class="drop" aria-label="Еще"><svg><use href="#caret"/></svg></button>
                </div>
                <div class="group">
                    <button class="icon" aria-label="Настройка вида"><svg><use href="#monitor"/></svg></button><button class="drop" aria-label="Еще"><svg><use href="#caret"/></svg></button>
                </div>
            </div>
            <div class="doc-controls">
                <button class="icon" aria-label="Слева"><svg><use href="#left"/></svg></button>
                <button class="icon" aria-label="Справа"><svg><use href="#right"/></svg></button>
                <button class="icon" aria-label="Свернуть"><svg><use href="#min"/></svg></button>
                <button class="icon" aria-label="Восстановить"><svg><use href="#restore"/></svg></button>
                <button class="icon" aria-label="Закрыть"><svg><use href="#close"/></svg></button>
            </div>
        </div>

        <main class="work">
            <!-- Дерево конструирования -->
            <aside class="panel">
                <div class="grip"><i></i></div>
                <div class="panel-tabs">
                    <button class="active" aria-label="Дерево"><svg><use href="#part"/></svg></button>
                    <button aria-label="Свойства"><svg><use href="#props"/></svg></button>
                    <button aria-label="Конфигурации"><svg><use href="#config"/></svg></button>
                    <button aria-label="Размеры"><svg><use href="#target"/></svg></button>
                    <button aria-label="Внешний вид"><svg><use href="#sphere"/></svg></button>
                    <button class="more" aria-label="Далее"><svg viewBox="0 0 6 8"><path d="M1 1l3 3-3 3" fill="none" stroke="#333"/></svg></button>
                </div>
                <label class="filter">
                    <svg><use href="#funnel"/></svg>
                    <input type="text" aria-label="Фильтр">
                </label>
                <ul class="tree">
                    <li class="root"><svg><use href="#part"/></svg>Кронштейн угл&nbsp; (По умолчанию&lt;&lt;По ум</li>
                    <li class="parent"><svg><use href="#history"/></svg>История</li>
                    <li><svg><use href="#sensor"/></svg>Датчики</li>
                    <li class="parent"><svg><use href="#note"/></svg>Примечания</li>
                    <li class="parent"><svg><use href="#cutlist"/></svg>Список вырезов(1)</li>
                    <li class="parent"><svg><use href="#sum"/></svg>Уравнения</li>
                    <li><svg><use href="#material"/></svg>Простая углеродистая сталь</li>
                    <li><svg><use href="#plane"/></svg>Спереди</li>
                    <li><svg><use href="#plane"/></svg>Сверху</li>
                    <li><svg><use href="#plane"/></svg>Справа</li>
                    <li><svg><use href="#origin"/></svg>Исходная точка</li>
                    <li class="parent"><svg><use href="#sheet"/></svg>Листовой металл</li>
                    <li class="parent"><svg><use href="#flange"/></svg>Базовая кромка1</li>
                    <li><svg><use href="#unfold"/></svg>Разогнуть1</li>
                    <li class="parent"><svg><use href="#cut"/></svg>Вырез-Вытянуть1</li>
                    <li class="parent"><svg><use href="#hole"/></svg>Зенковка для винта с полупотайной г</li>
                    <li><svg><use href="#refold"/></svg>Согнуть1</li>
                    <li class="parent"><svg><use href="#revolve"/></svg>Повернуть1</li>
                    <li><svg><use href="#move"/></svg>Тело-Переместить/Копировать1</li>
                    <li><svg><use href="#combine"/></svg>Соединить1</li>
                    <li><svg><use href="#sketch"/></svg>Эскиз12</li>
                    <li><svg><use href="#split"/></svg>Разделить1</li>
                    <li><svg><use href="#fillet"/></svg>Скругление1</li>
                    <li><svg><use href="#fillet"/></svg>Скругление2</li>
                    <li><svg><use href="#moveface"/></svg>Переместить грань1</li>
                    <li><svg><use href="#shell"/></svg>Оболочка4</li>
                    <li class="parent off"><svg><use href="#flat"/></svg>Развертка</li>
                </ul>
                <div class="scroll">
                    <button aria-label="Влево"><svg viewBox="0 0 6 8"><path d="M4 1L1 4l3 3" fill="none" stroke="#222"/></svg></button>
                    <div class="track"><div class="thumb"></div></div>
                    <button aria-label="Вправо"><svg viewBox="0 0 6 8"><path d="M1 1l3 3-3 3" fill="none" stroke="#222"/></svg></button>
                </div>
            </aside>

            <!-- Графическая область -->
            <section class="viewport">
                <div class="splitter"><i></i></div>
                <svg class="model" viewBox="270 165 300 455" role="img" aria-label="Угловой кронштейн">
                    <defs>
                        <linearGradient id="ribTop" gradientUnits="userSpaceOnUse" x1="383" y1="284" x2="416" y2="245"><stop offset="0" stop-color="#6b6764"/><stop offset=".2" stop-color="#96918d"/><stop offset=".5" stop-color="#b3aeaa"/><stop offset=".8" stop-color="#8d8985"/><stop offset="1" stop-color="#777370"/></linearGradient>
                        <linearGradient id="ribFront" gradientUnits="userSpaceOnUse" x1="472" y1="435" x2="515" y2="425"><stop offset="0" stop-color="#67625f"/><stop offset=".2" stop-color="#989390"/><stop offset=".55" stop-color="#cdc8c4"/><stop offset="1" stop-color="#c3bebb"/></linearGradient>
                        <linearGradient id="bendFill" gradientUnits="userSpaceOnUse" x1="420" y1="346" x2="426" y2="368"><stop offset="0" stop-color="#85817e"/><stop offset=".6" stop-color="#bdb8b5"/><stop offset="1" stop-color="#b2aeab"/></linearGradient>
                        <linearGradient id="bendFillR" gradientUnits="userSpaceOnUse" x1="518" y1="302" x2="526" y2="320"><stop offset="0" stop-color="#85817e"/><stop offset=".6" stop-color="#bdb8b5"/><stop offset="1" stop-color="#b2aeab"/></linearGradient>
                        <radialGradient id="corner" gradientUnits="userSpaceOnUse" cx="478" cy="340" r="27"><stop offset="0" stop-color="#f7f5f2"/><stop offset=".3" stop-color="#cbc7c3"/><stop offset="1" stop-color="#817d7a"/></radialGradient>
                        <linearGradient id="capTop" x1="0" y1="0" x2="1" y2="0"><stop offset="0" stop-color="#7a7673"/><stop offset="1" stop-color="#c0bbb7"/></linearGradient>
                        <radialGradient id="capFront"><stop offset="0" stop-color="#dedad6"/><stop offset="1" stop-color="#96918d"/></radialGradient>
                        <linearGradient id="sink" x1="0" y1="0" x2="1" y2="0"><stop offset="0" stop-color="#76726f"/><stop offset=".4" stop-color="#aaa5a2"/><stop offset="1" stop-color="#8b8683"/></linearGradient>
                        <linearGradient id="sinkFront" x1="0" y1="0" x2="1" y2="0"><stop offset="0" stop-color="#d5d0cc"/><stop offset=".5" stop-color="#88837f"/><stop offset="1" stop-color="#a5a09c"/></linearGradient>
                    </defs>
                    <g stroke="#222" stroke-width=".8" stroke-linejoin="round">
                        <path d="M283 213c-3-12 4-22 15-28 15-8 36-10 52-2l190 103c8 4 11 9 11 20l2 94 2 87 4 76c1 17-10 35-27 41-14 5-34 2-41-16l-84-213-7-15-110-135z" fill="#aaa5a2"/>
                        <path d="M283 207c3-17 24-26 48-24 7 0 13 2 19 5l190 103-43 23-50 24-47 22-110-135c-4-4-7-9-7-18z" fill="#878380"/>
                        <path d="M407 375l46-23 50-25 48-21 1 181 4 76c0 19-12 34-27 39-14 5-31 4-38-14z" fill="#b5b1ae"/>
                        <path d="M400 360l47-22c4 3 6 7 6 14l-46 23z" fill="url(#bendFill)"/>
                        <path d="M497 314l43-23c7 3 11 8 11 15l-48 21z" fill="url(#bendFillR)"/>
                        <path d="M447 338L325 235c-7-6-7-14-1-20 8-7 22-9 32-4l141 103c4 3 6 8 6 13l32 205c2 14-7 25-17 28-10 3-17-3-20-13L450 354c-1-8-1-12-3-16z" fill="#b8b4b0"/>
                        <path d="M447 338L327 233c-5-8 0-15 10-18 7-3 14-3 20-2l136 105c-13 2-31 7-46 20z" fill="url(#ribTop)"/>
                        <path d="M325 230c0-11 19-20 32-17-2 9-8 16-17 20-5 2-12 2-15-3z" fill="url(#capTop)"/>
                        <path d="M453 352c14 10 38-6 44-25l33 206c-1 12-7 20-15 22-7 1-12-4-14-12z" fill="url(#ribFront)"/>
                        <path d="M501 544c6-10 17-14 29-12-1 13-7 21-15 23-7 1-12-3-14-11z" fill="url(#capFront)"/>
                        <path d="M530 532h5" fill="none"/>
                        <path d="M447 338c14-14 30-19 46-20 4 2 5 5 4 9-4 14-27 34-40 28-6-4-6-12-10-17z" fill="url(#corner)"/>
                        <path d="M493 318c3 2 5 6 4 9h6c0-6-2-10-6-13z" fill="#d1cdca"/>
                    </g>
                    <g fill="url(#sink)" stroke="#333" stroke-width=".8">
                        <ellipse cx="317" cy="202" rx="16" ry="10"/><ellipse cx="377" cy="300" rx="16" ry="10"/><ellipse cx="489" cy="284" rx="16" ry="10"/>
                    </g>
                    <g fill="url(#sinkFront)" stroke="#333" stroke-width=".8">
                        <ellipse cx="440" cy="400" rx="13" ry="15" transform="rotate(18 440 400)"/><ellipse cx="532" cy="405" rx="13" ry="15" transform="rotate(18 532 405)"/><ellipse cx="524" cy="578" rx="13" ry="15" transform="rotate(18 524 578)"/>
                    </g>
                    <g fill="#fff" stroke="#333" stroke-width=".6">
                        <ellipse cx="316" cy="198" rx="11" ry="6" transform="rotate(-6 316 198)"/><ellipse cx="376" cy="297" rx="11" ry="6" transform="rotate(-6 376 297)"/><ellipse cx="489" cy="280" rx="11" ry="6" transform="rotate(-6 489 280)"/>
                        <ellipse cx="443" cy="402" rx="9" ry="10" transform="rotate(25 443 402)"/><ellipse cx="535" cy="407" rx="9" ry="10" transform="rotate(25 535 407)"/><ellipse cx="527" cy="580" rx="9" ry="10" transform="rotate(25 527 580)"/>
                    </g>
                    <path d="M349 183l191 103" stroke="#ef8a1c" stroke-width="3" fill="none"/>
                </svg>
                <p class="caption">Угловой кронштейн<br>(Вариант 1)</p>
                <svg class="triad" viewBox="0 0 38 26" aria-hidden="true">
                    <path d="M22 3L9 8" stroke="#a11c22" stroke-width="3"/><path d="M5 10l6-5 2 4z" fill="#a11c22"/>
                    <path d="M22 3l8 6" stroke="#185c20" stroke-width="3"/><path d="M34 12l-7-1 3-5z" fill="#185c20"/>
                    <path d="M22 3l2 10" stroke="#2429b4" stroke-width="3"/><path d="M25 18l-4-6 5-1z" fill="#2429b4"/>
                    <text x="0" y="14" fill="#b33">X</text><text x="32" y="14" fill="#286b30">Y</text><text x="23" y="24" fill="#33b">Z</text>
                </svg>
                <div class="taskpane">
                    <button class="active" aria-label="Ресурсы"><svg><use href="#home"/></svg></button>
                    <button aria-label="Библиотека"><svg><use href="#library"/></svg></button>
                    <button aria-label="Проводник"><svg><use href="#files"/></svg></button>
                    <button aria-label="Палитра видов"><svg><use href="#palette"/></svg></button>
                    <button aria-label="Внешние виды"><svg><use href="#sphere"/></svg></button>
                    <button aria-label="Свойства"><svg><use href="#props"/></svg></button>
                </div>
            </section>
        </main>

        <div class="sheets">
            <div class="nav">
                <button aria-label="В начало"><svg viewBox="0 0 8 8"><path d="M2 1v6M6 1L3 4l3 3z"/></svg></button>
                <button aria-label="Назад"><svg viewBox="0 0 8 8"><path d="M5 1L2 4l3 3z"/></svg></button>
                <button aria-label="Вперед"><svg viewBox="0 0 8 8"><path d="M3 1l3 3-3 3z"/></svg></button>
                <button aria-label="В конец"><svg viewBox="0 0 8 8"><path d="M6 1v6M2 1l3 3-3 3z"/></svg></button>
            </div>
            <button class="active">Модель</button>
            <button>Трехмерные виды</button>
            <button class="wide">Исследование движения 1</button>
        </div>

        <footer class="status">
            <span>SOLIDWORKS Premium 2016 x64 Edition</span>
            <span class="mode">Редактируется Деталь</span>
            <button>Настройка <svg><use href="#caret"/></svg></button>
            <svg class="tag"><use href="#tag"/></svg>
        </footer>
    </div>
</body>
</html>
```
FILE: styles.css
```
* {
    box-sizing: border-box;
}

body {
    margin: 0;
    height: 100vh;
    padding: 14px 0;
    background: #000;
    color: #111;
    font: 8px/12px Lato, "Noto Sans", sans-serif;
}

button {
    margin: 0;
    padding: 0;
    border: 0;
    background: none;
    color: inherit;
    font: inherit;
    white-space: nowrap;
}

svg {
    display: block;
    flex: none;
}

svg text {
    font-family: "Liberation Sans", Arial, sans-serif;
}

.sprite {
    position: absolute;
    width: 0;
    height: 0;
}

.window {
    display: flex;
    flex-direction: column;
    height: 100%;
    background: #d6d9df;
    overflow: hidden;
}

/* Кнопки со значками */
.icon {
    display: flex;
    align-items: center;
    justify-content: center;
    flex: none;
    width: 17px;
    height: 17px;
}

.icon svg {
    width: 13px;
    height: 13px;
}

.drop {
    width: 9px;
    height: 17px;
}

.drop svg {
    width: 7px;
    height: 14px;
    margin: 0 auto;
}

.faded {
    opacity: .5;
}

.tools,
.group {
    display: flex;
    align-items: center;
}

.tools {
    gap: 1px;
}

/* Заголовок */
.titlebar {
    display: flex;
    align-items: center;
    flex: none;
    height: 21px;
    border-bottom: 1px solid #8f9194;
    background: #e4e4e4;
}

.brand {
    display: flex;
    align-items: center;
    gap: 4px;
    width: 96px;
    height: 20px;
    margin-left: 7px;
    padding-left: 3px;
    background: #fff;
    color: #c8202c;
    font: 10px/20px "Open Sans", sans-serif;
}

.brand b {
    font-weight: 800;
}

.brand-mark {
    width: 18px;
    height: 18px;
}

.menu {
    display: flex;
    align-items: center;
    gap: 9px;
    width: 359px;
    height: 20px;
    padding-left: 18px;
    background: #a9aaad;
}

.menu .pin {
    margin-left: auto;
    margin-right: 3px;
}

.menu .pin svg {
    width: 10px;
    height: 10px;
}

.quick {
    margin-left: 8px;
}

.select {
    height: 18px;
    border: 1px solid #8ea0ab;
}

.pressed {
    border-right: 1px solid #8ea0ab;
    background: #abb2b8;
}

.titlebar h1 {
    flex: 1;
    margin: 0;
    text-align: center;
    font: inherit;
}

.controls {
    display: flex;
    align-items: center;
    color: #555;
}

.controls .icon svg {
    width: 10px;
    height: 10px;
}

.help {
    width: 16px;
    font-size: 12px;
    font-weight: bold;
}

/* Панель элементов */
.features {
    flex: none;
    height: 22px;
    padding-left: 4px;
    border-bottom: 1px solid #a5a8ad;
}

.lined {
    padding-left: 2px;
    border-left: 1px solid #c3c6cb;
}

/* Вкладки */
.tabrow {
    display: flex;
    flex: none;
    height: 14px;
    background: #fff;
}

.tabs {
    display: flex;
    background: #a6a7a9;
}

.tabs button {
    padding: 0 5px;
    border-right: 1px solid #929497;
    line-height: 14px;
}

.tabs .active {
    background: #d6d9df;
}

.headsup {
    z-index: 1;
    align-self: flex-start;
    margin: 1px 0 0 37px;
}

.headsup .drop {
    opacity: .6;
}

.doc-controls {
    z-index: 1;
    display: flex;
    align-self: flex-start;
    margin: 1px 5px 0 auto;
    color: #888;
}

.doc-controls svg {
    width: 10px;
    height: 10px;
}

/* Рабочая область */
.work {
    display: flex;
    flex: 1;
    min-height: 0;
}

.panel {
    display: flex;
    flex-direction: column;
    flex: none;
    width: 172px;
    border-top: 1px solid #9a9da2;
    border-right: 1px solid #8b8d90;
}

.grip {
    display: flex;
    align-items: center;
    justify-content: center;
    height: 12px;
    border-bottom: 1px solid #a5a8ad;
}

.grip i,
.splitter i {
    width: 4px;
    height: 4px;
    border: 1px solid #888;
    border-radius: 50%;
}

.panel-tabs {
    display: flex;
    height: 19px;
    padding-top: 1px;
}

.panel-tabs button {
    display: flex;
    align-items: center;
    justify-content: center;
    width: 27px;
    border-right: 1px solid #8d8f92;
    background: #a6a7a9;
}

.panel-tabs svg {
    width: 13px;
    height: 13px;
}

.panel-tabs .active,
.panel-tabs .more {
    border: 0;
    background: none;
}

.panel-tabs .more {
    width: 13px;
    margin-left: auto;
}

.more svg {
    width: 6px;
    height: 8px;
}

.filter {
    display: flex;
    align-items: center;
    height: 17px;
    margin: 1px 2px 0;
    background: #f0f0f0;
    border: 1px solid #e2e4e8;
}

.filter svg {
    width: 13px;
    height: 13px;
}

.filter input {
    flex: 1;
    min-width: 0;
    height: 14px;
    border: 0;
    background: none;
    font: inherit;
}

.tree {
    margin: 0;
    padding: 0;
    border-bottom: 2px solid #4470ac;
    list-style: none;
    overflow: hidden;
}

.tree li {
    position: relative;
    display: flex;
    align-items: center;
    gap: 3px;
    height: 15px;
    padding-left: 16px;
    white-space: nowrap;
}

.tree li:nth-child(3n + 1) {
    height: 14px;
}

.tree svg {
    width: 13px;
    height: 13px;
}

.tree .root {
    padding-left: 1px;
    gap: 2px;
}

.tree .parent::before {
    content: "";
    position: absolute;
    left: 5px;
    border: 2px solid transparent;
    border-left: 3px solid #555;
}

.tree .off {
    color: #8a8c90;
}

.scroll {
    display: flex;
    height: 12px;
    margin-top: auto;
    background: #f0f0f0;
}

.scroll button {
    width: 11px;
}

.scroll svg {
    width: 6px;
    height: 8px;
    margin: 0 auto;
}

.track {
    flex: 1;
}

.thumb {
    width: 54%;
    height: 10px;
    margin-top: 1px;
    background: #cacaca;
}

/* Модель */
.viewport {
    position: relative;
    display: flex;
    flex: 1;
    align-items: flex-start;
    background: #fff;
    overflow: hidden;
}

.splitter {
    position: absolute;
    top: 286px;
    left: -1px;
    display: flex;
    align-items: center;
    justify-content: center;
    width: 7px;
    height: 27px;
    border: 1px solid #aaa;
    background: #f4f4f4;
}

.model {
    width: 300px;
    height: 455px;
    margin: 94px 0 0 98px;
}

.caption {
    flex: 1;
    align-self: flex-end;
    margin: 0 38px 50px 80px;
    color: #f00000;
    font: italic 300 87px/89px "Open Sans Condensed Light", "Roboto Condensed Light", "Roboto Condensed", Roboto, sans-serif;
    text-align: center;
    white-space: nowrap;
}

.triad {
    position: absolute;
    left: 4px;
    bottom: 16px;
    width: 38px;
    height: 26px;
}

.triad text {
    font: 8px "Liberation Serif", serif;
}

.taskpane {
    position: absolute;
    top: 15px;
    right: 0;
    width: 18px;
    border: 1px solid #8b8d90;
    background: #a6a7a9;
}

.taskpane button {
    display: flex;
    align-items: center;
    justify-content: center;
    width: 16px;
    height: 16px;
    border-bottom: 1px solid #8b8d90;
}

.taskpane .active {
    background: #d6d9df;
}

.taskpane svg {
    width: 13px;
    height: 13px;
}

/* Нижние вкладки */
.sheets {
    display: flex;
    flex: none;
    height: 11px;
    border-top: 1px solid #9a9da2;
}

.sheets > button {
    padding: 0 8px;
    border-right: 1px solid #929497;
    background: #a6a7a9;
    line-height: 10px;
}

.sheets > .active {
    background: #e4e6ea;
    font-weight: bold;
}

.sheets > .wide {
    padding: 0 14px 0 9px;
}

.nav {
    display: flex;
    width: 45px;
    padding-left: 1px;
}

.nav button {
    width: 11px;
    border: 1px solid #808285;
    background: #a6a7a9;
}

.nav svg {
    width: 7px;
    height: 7px;
    margin: 0 auto;
    fill: #888;
    stroke: #888;
}

.status {
    display: flex;
    align-items: center;
    flex: none;
    height: 13px;
    border-top: 1px solid #8f9194;
    background: #e4e4e4;
}

.status .mode {
    margin-left: auto;
    margin-right: 35px;
}

.status button {
    display: flex;
    align-items: center;
    gap: 8px;
    margin-right: 45px;
}

.status button svg {
    width: 6px;
    height: 12px;
}

.status .tag {
    width: 11px;
    height: 11px;
    margin-right: 2px;
}
```
